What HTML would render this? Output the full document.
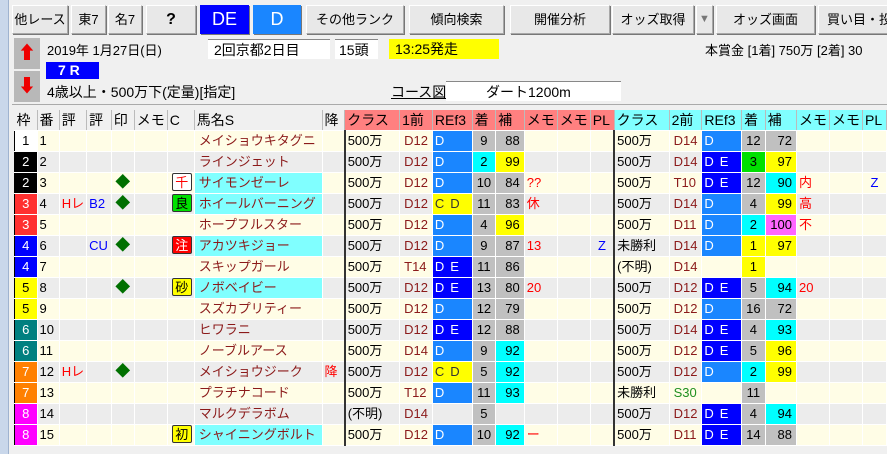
<!DOCTYPE html>
<html><head><meta charset="utf-8"><style>
*{margin:0;padding:0;box-sizing:border-box}
body{width:887px;height:454px;overflow:hidden;background:#f0f0f0;font-family:"Liberation Sans","Noto Sans CJK JP",sans-serif;position:relative;color:#000}
.edge{position:absolute;left:0;top:0;width:9px;height:454px;background:#c9d7ea;border-right:1px solid #9fb3cf}
.btn{position:absolute;top:5px;height:29px;background:#e8e8e8;border:1px solid #a8a8a8;border-top-color:#fff;border-left-color:#fff;font-size:13px;text-align:center;line-height:27px;box-shadow:1px 1px 0 #777;white-space:nowrap;overflow:hidden}
.info{position:absolute;font-size:14px;white-space:nowrap}
.arrow{position:absolute;left:14px;width:26px;height:31px;background:#b8b8b8;color:#e00;font-size:18px;text-align:center;line-height:31px}
table{position:absolute;left:14px;top:110px;border-collapse:collapse;table-layout:fixed;font-size:13px}
td{height:21px;border-right:1px solid #fff;border-bottom:1px solid #fff;white-space:nowrap;overflow:hidden;padding:0 2px;line-height:20px}
tr.h td{height:20px;background:#f0f0f0;border-right:1px solid #bbb;font-size:14px;padding-left:2px}
tr.h td.r{background:#ff8080}
tr.h td.c{background:#80ffff}
tr.a td{background:#fffde6}
tr.b td{background:#ececec}
td.w{text-align:center;color:#fff;border-left:1px solid #000}
td.nm{color:#8b1a1a;padding-left:4px}
tr td.cy{background:#80ffff}
td.cl{border-left:2px solid #333;padding-left:2px}
td.z{color:#8b1a1a;padding-left:4px}
tr td.D{background:#1a86ff;color:#fff;letter-spacing:6px;padding-left:2px}
tr td.DE{background:#0000ff;color:#fff;letter-spacing:6px;padding-left:2px}
tr td.CD{background:#ffff00;color:#333;letter-spacing:6px;padding-left:2px}
tr td.g{background:#c0c0c0;text-align:center}
tr td.gr{background:#c0c0c0;text-align:right;padding-right:4px}
tr td.yl{background:#ffff00}
tr td.cn{background:#00ffff}
tr td.gn{background:#00e000}
tr td.mg{background:#ff66ff}
.red{color:#f00}.blu{color:#00f}
.dia{color:#007000;text-align:center;font-size:15px}
.mk{display:inline-block;width:20px;height:18px;line-height:17px;text-align:center;border:1px solid #333;border-radius:2px;font-size:13px;margin-left:2px}
</style></head><body>
<div class="edge"></div>
<div class="btn" style="left:12px;width:56px">他レース</div>
<div class="btn" style="left:71px;width:35px">東7</div>
<div class="btn" style="left:108px;width:34px">名7</div>
<div class="btn" style="left:146px;width:50px;font-weight:bold;font-size:16px">?</div>
<div class="btn" style="left:200px;width:49px;background:#0000ff;color:#fff;font-size:18px;border-color:#0000ff">DE</div>
<div class="btn" style="left:253px;width:48px;background:#1a86ff;color:#fff;font-size:18px;border-color:#1a86ff">D</div>
<div class="btn" style="left:306px;width:98px">その他ランク</div>
<div class="btn" style="left:409px;width:95px">傾向検索</div>
<div class="btn" style="left:510px;width:100px">開催分析</div>
<div class="btn" style="left:612px;width:82px">オッズ取得</div>
<div class="btn" style="left:696px;width:17px;color:#777;font-size:11px">▼</div>
<div class="btn" style="left:716px;width:99px">オッズ画面</div>
<div class="btn" style="left:818px;width:75px;text-align:left;padding-left:8px">買い目・投</div>

<div class="arrow" style="top:38px">⬆</div>
<div class="arrow" style="top:71px">⬇</div>
<div class="info" style="left:47px;top:40px;font-size:13px">2019年 1月27日(日)</div>
<div class="info" style="left:208px;top:39px;width:122px;height:20px;background:#fff;border-top:1px solid #888;padding-left:6px">2回京都2日目</div>
<div class="info" style="left:335px;top:39px;width:43px;height:20px;background:#fff;border-top:1px solid #888;padding-left:4px">15頭</div>
<div class="info" style="left:389px;top:39px;width:110px;height:20px;background:#ff0;padding-left:6px">13:25発走</div>
<div class="info" style="left:705px;top:40px;font-size:13px">本賞金 [1着] 750万 [2着] 30</div>
<div class="info" style="left:46px;top:62px;width:53px;height:17px;background:#0000ff;color:#fff;font-weight:bold;line-height:17px;padding-left:12px">7 R</div>
<div class="info" style="left:47px;top:82px">4歳以上・500万下(定量)[指定]</div>
<div class="info" style="left:391px;top:82px;text-decoration:underline">コース図</div>
<div class="info" style="left:446px;top:81px;width:175px;height:20px;background:#fff;border-top:1px solid #888;padding-left:40px">ダート1200m</div>
<div style="position:absolute;left:12px;top:104px;width:875px;height:1px;background:#aaa"></div>
<div style="position:absolute;left:884px;top:110px;width:3px;height:20px;background:#80ff80"></div>

<table>
<colgroup><col style="width:25px"><col style="width:24px"><col style="width:25px"><col style="width:25px"><col style="width:25px"><col style="width:25px"><col style="width:26px"><col style="width:130px"><col style="width:25px"><col style="width:60px"><col style="width:34px"><col style="width:42px"><col style="width:26px"><col style="width:33px"><col style="width:25px"><col style="width:25px"><col style="width:25px"><col style="width:60px"><col style="width:34px"><col style="width:42px"><col style="width:26px"><col style="width:33px"><col style="width:25px"><col style="width:25px"><col style="width:25px"></colgroup>
<tr class="h"><td>枠</td><td>番</td><td>評</td><td>評</td><td>印</td><td>メモ</td><td>C</td><td>馬名S</td><td>降</td><td class="r">クラス</td><td class="r">1前</td><td class="r">REf3</td><td class="r">着</td><td class="r">補</td><td class="r">メモ</td><td class="r">メモ</td><td class="r">PL</td><td class="c">クラス</td><td class="c">2前</td><td class="c">REf3</td><td class="c">着</td><td class="c">補</td><td class="c">メモ</td><td class="c">メモ</td><td class="c">PL</td></tr>
<tr class="a"><td class="w" style="background:#fff;color:#000">1</td><td>1</td><td></td><td></td><td></td><td></td><td></td><td class="nm">メイショウキタグニ</td><td></td><td class="cl">500万</td><td class="z">D12</td><td class="D">D</td><td class="g">9</td><td class="gr">88</td><td></td><td></td><td></td><td class="cl">500万</td><td class="z">D14</td><td class="D">D</td><td class="g">12</td><td class="gr">72</td><td></td><td></td><td></td></tr>
<tr class="b"><td class="w" style="background:#000">2</td><td>2</td><td></td><td></td><td></td><td></td><td></td><td class="nm">ラインジェット</td><td></td><td class="cl">500万</td><td class="z">D12</td><td class="D">D</td><td class="g cn">2</td><td class="gr yl">99</td><td></td><td></td><td></td><td class="cl">500万</td><td class="z">D14</td><td class="DE">DE</td><td class="g gn">3</td><td class="gr yl">97</td><td></td><td></td><td></td></tr>
<tr class="a"><td class="w" style="background:#000">2</td><td>3</td><td></td><td></td><td class="dia">◆</td><td></td><td><span class="mk red" style="background:#fff">千</span></td><td class="nm cy">サイモンゼーレ</td><td></td><td class="cl">500万</td><td class="z">D12</td><td class="D">D</td><td class="g">10</td><td class="gr">84</td><td class="red">??</td><td></td><td></td><td class="cl">500万</td><td class="z blu">T10</td><td class="DE">DE</td><td class="g">12</td><td class="gr cn">90</td><td class="red">内</td><td></td><td class="blu" style="text-align:center">Z</td></tr>
<tr class="b"><td class="w" style="background:#ff3030">3</td><td>4</td><td class="red">Hレ</td><td class="blu">B2</td><td class="dia">◆</td><td></td><td><span class="mk" style="background:#00e000">良</span></td><td class="nm cy">ホイールバーニング</td><td></td><td class="cl">500万</td><td class="z">D12</td><td class="CD">CD</td><td class="g">11</td><td class="gr">83</td><td class="red">休</td><td></td><td></td><td class="cl">500万</td><td class="z">D14</td><td class="D">D</td><td class="g">4</td><td class="gr yl">99</td><td class="red">高</td><td></td><td></td></tr>
<tr class="a"><td class="w" style="background:#ff3030">3</td><td>5</td><td></td><td></td><td></td><td></td><td></td><td class="nm">ホープフルスター</td><td></td><td class="cl">500万</td><td class="z">D12</td><td class="D">D</td><td class="g">4</td><td class="gr yl">96</td><td></td><td></td><td></td><td class="cl">500万</td><td class="z">D11</td><td class="D">D</td><td class="g cn">2</td><td class="gr mg">100</td><td class="red">不</td><td></td><td></td></tr>
<tr class="b"><td class="w" style="background:#0000ff">4</td><td>6</td><td></td><td class="blu">CU</td><td class="dia">◆</td><td></td><td><span class="mk" style="background:#f00;color:#fff">注</span></td><td class="nm cy">アカツキジョー</td><td></td><td class="cl">500万</td><td class="z">D12</td><td class="D">D</td><td class="g">9</td><td class="gr">87</td><td class="red">13</td><td></td><td class="blu" style="text-align:center">Z</td><td class="cl">未勝利</td><td class="z">D14</td><td class="D">D</td><td class="g yl">1</td><td class="gr yl">97</td><td></td><td></td><td></td></tr>
<tr class="a"><td class="w" style="background:#0000ff">4</td><td>7</td><td></td><td></td><td></td><td></td><td></td><td class="nm">スキップガール</td><td></td><td class="cl">500万</td><td class="z blu">T14</td><td class="DE">DE</td><td class="g">11</td><td class="gr">86</td><td></td><td></td><td></td><td class="cl">(不明)</td><td class="z">D14</td><td></td><td class="g yl">1</td><td></td><td></td><td></td><td></td></tr>
<tr class="b"><td class="w" style="background:#ffff00;color:#000">5</td><td>8</td><td></td><td></td><td class="dia">◆</td><td></td><td><span class="mk" style="background:#ff0">砂</span></td><td class="nm cy">ノボベイビー</td><td></td><td class="cl">500万</td><td class="z">D12</td><td class="DE">DE</td><td class="g">13</td><td class="gr">80</td><td class="red">20</td><td></td><td></td><td class="cl">500万</td><td class="z">D12</td><td class="DE">DE</td><td class="g">5</td><td class="gr cn">94</td><td class="red">20</td><td></td><td></td></tr>
<tr class="a"><td class="w" style="background:#ffff00;color:#000">5</td><td>9</td><td></td><td></td><td></td><td></td><td></td><td class="nm">スズカプリティー</td><td></td><td class="cl">500万</td><td class="z">D12</td><td class="D">D</td><td class="g">12</td><td class="gr">79</td><td></td><td></td><td></td><td class="cl">500万</td><td class="z">D12</td><td class="D">D</td><td class="g">16</td><td class="gr">72</td><td></td><td></td><td></td></tr>
<tr class="b"><td class="w" style="background:#008080">6</td><td>10</td><td></td><td></td><td></td><td></td><td></td><td class="nm">ヒワラニ</td><td></td><td class="cl">500万</td><td class="z">D12</td><td class="DE">DE</td><td class="g">12</td><td class="gr">88</td><td></td><td></td><td></td><td class="cl">500万</td><td class="z">D14</td><td class="DE">DE</td><td class="g">4</td><td class="gr cn">93</td><td></td><td></td><td></td></tr>
<tr class="a"><td class="w" style="background:#008080">6</td><td>11</td><td></td><td></td><td></td><td></td><td></td><td class="nm">ノーブルアース</td><td></td><td class="cl">500万</td><td class="z">D14</td><td class="D">D</td><td class="g">9</td><td class="gr cn">92</td><td></td><td></td><td></td><td class="cl">500万</td><td class="z">D12</td><td class="DE">DE</td><td class="g">5</td><td class="gr yl">96</td><td></td><td></td><td></td></tr>
<tr class="b"><td class="w" style="background:#ff8000">7</td><td>12</td><td class="red">Hレ</td><td></td><td class="dia">◆</td><td></td><td></td><td class="nm">メイショウジーク</td><td class="red">降</td><td class="cl">500万</td><td class="z">D12</td><td class="CD">CD</td><td class="g">5</td><td class="gr cn">92</td><td></td><td></td><td></td><td class="cl">500万</td><td class="z">D12</td><td class="D">D</td><td class="g cn">2</td><td class="gr yl">99</td><td></td><td></td><td></td></tr>
<tr class="a"><td class="w" style="background:#ff8000">7</td><td>13</td><td></td><td></td><td></td><td></td><td></td><td class="nm">プラチナコード</td><td></td><td class="cl">500万</td><td class="z blu">T12</td><td class="D">D</td><td class="g">11</td><td class="gr cn">93</td><td></td><td></td><td></td><td class="cl">未勝利</td><td class="z" style="color:#209020">S30</td><td></td><td class="g">11</td><td></td><td></td><td></td><td></td></tr>
<tr class="b"><td class="w" style="background:#ff00ff">8</td><td>14</td><td></td><td></td><td></td><td></td><td></td><td class="nm">マルクデラボム</td><td></td><td class="cl">(不明)</td><td class="z">D14</td><td></td><td class="g">5</td><td></td><td></td><td></td><td></td><td class="cl">500万</td><td class="z">D12</td><td class="DE">DE</td><td class="g">4</td><td class="gr cn">94</td><td></td><td></td><td></td></tr>
<tr class="a"><td class="w" style="background:#ff00ff">8</td><td>15</td><td></td><td></td><td></td><td></td><td><span class="mk" style="background:#ff0">初</span></td><td class="nm cy">シャイニングボルト</td><td></td><td class="cl">500万</td><td class="z">D12</td><td class="D">D</td><td class="g">10</td><td class="gr cn">92</td><td class="red">ー</td><td></td><td></td><td class="cl">500万</td><td class="z">D11</td><td class="DE">DE</td><td class="g">14</td><td class="gr">88</td><td></td><td></td><td></td></tr>
</table>
</body></html>
